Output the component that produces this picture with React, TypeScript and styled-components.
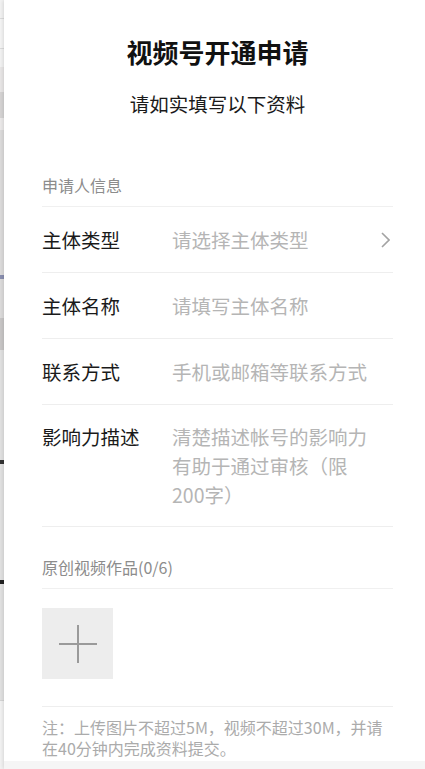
import React from 'react';
import styled, { createGlobalStyle } from 'styled-components';

const GlobalStyle = createGlobalStyle`
  html, body {
    margin: 0;
    padding: 0;
  }
  body {
    font-family: 'Noto Sans CJK SC', 'Noto Sans', sans-serif;
    background: #fff;
    overflow: hidden;
  }
  * {
    box-sizing: border-box;
  }
`;

type BandProps = {
  h: number;
  color: string;
};

const Shell = styled.div`
  display: flex;
  width: 425px;
  height: 769px;
  overflow: hidden;
`;

const LeftPeek = styled.div`
  width: 4px;
  flex-shrink: 0;
  display: flex;
  flex-direction: column;
  background: #f3f3f3;
`;

const Band = styled.div<BandProps>`
  height: ${(p) => p.h}px;
  flex-shrink: 0;
  background: ${(p) => p.color};
`;

const Drawer = styled.div`
  width: 421px;
  min-width: 0;
  flex-shrink: 0;
  display: flex;
  flex-direction: column;
  background: #fff;
  box-shadow: -1px 0 4px rgba(0, 0, 0, 0.12);
  position: relative;
`;

const Content = styled.div`
  width: 100%;
  padding: 34px 32px 0 38px;
`;

const Title = styled.h1`
  margin: 0;
  font-size: 26px;
  font-weight: 700;
  line-height: 36px;
  text-align: center;
  color: #111;
`;

const Subtitle = styled.p`
  margin: 19px 0 0;
  font-size: 19.5px;
  line-height: 29px;
  text-align: center;
  color: #1a1a1a;
`;

const SectionHead = styled.div<{ top: number }>`
  margin-top: ${(p) => (p.top > 40 ? p.top : 0)}px;
  padding: ${(p) => (p.top > 40 ? 0 : p.top)}px 0 9px;
  font-size: 16px;
  line-height: 24px;
  color: #8c8c8c;
  border-bottom: 1px solid #f0f0f0;
`;

const Row = styled.div<{ pad: number }>`
  display: flex;
  align-items: flex-start;
  width: 100%;
  padding: ${(p) => p.pad}px 0;
  border-bottom: 1px solid #eee;
  font-size: 19.5px;
  line-height: 29px;
`;

const Label = styled.div`
  width: 130px;
  flex-shrink: 0;
  color: #1a1a1a;
`;

const Placeholder = styled.div`
  flex: 1;
  min-width: 0;
  color: #b5b5b5;
`;

const Field = styled.input`
  display: block;
  width: 201px;
  height: 29px;
  margin: 0;
  padding: 0;
  border: 0;
  outline: none;
  background: transparent;
  font: inherit;
  color: #1a1a1a;

  &::placeholder {
    color: #b5b5b5;
  }
`;

const Area = styled.textarea`
  display: block;
  width: 201px;
  height: 87px;
  margin: 0;
  padding: 0;
  border: 0;
  outline: none;
  resize: none;
  overflow: hidden;
  background: transparent;
  font: inherit;
  line-height: 29px;
  color: #1a1a1a;

  &::placeholder {
    color: #b5b5b5;
  }
`;

const Chevron = styled.svg`
  align-self: center;
  margin-right: 3px;
  flex-shrink: 0;
`;

const UploadArea = styled.div`
  padding: 19px 0 27px;
  border-bottom: 1px solid #eee;
`;

const UploadBox = styled.button`
  width: 71px;
  height: 71px;
  padding: 0;
  border: 0;
  background: #ededed;
  display: flex;
  align-items: center;
  justify-content: center;
  cursor: pointer;
`;

const Note = styled.p`
  margin: 0;
  padding-top: 10px;
  font-size: 16px;
  line-height: 21px;
  color: #ababab;
`;

const Footer = styled.div`
  margin-top: 2px;
  height: 60px;
  background: #f5f5f5;
`;

const PEEK_BANDS = [
  { h: 18, color: '#f3f3f3' },
  { h: 1, color: '#dcdcdc' },
  { h: 29, color: '#f5f5f5' },
  { h: 1, color: '#dcdcdc' },
  { h: 18, color: '#f3f3f3' },
  { h: 25, color: '#e9e7e7' },
  { h: 26, color: '#d6d4d4' },
  { h: 12, color: '#eceaea' },
  { h: 145, color: '#dddcdc' },
  { h: 4, color: '#8a8fb0' },
  { h: 39, color: '#dddcdc' },
  { h: 32, color: '#c9c7c7' },
  { h: 110, color: '#e2e2e2' },
  { h: 4, color: '#333' },
  { h: 116, color: '#e2e2e2' },
  { h: 4, color: '#222' },
  { h: 116, color: '#e2e2e2' },
  { h: 1, color: '#d5d5d5' },
  { h: 68, color: '#f3f3f3' },
];

const App = () => {
  return (
    <>
      <GlobalStyle />
      <Shell>
        <LeftPeek>
          {PEEK_BANDS.map((b, i) => (
            <Band key={i} h={b.h} color={b.color} />
          ))}
        </LeftPeek>
        <Drawer>
          <Content>
            <Title>视频号开通申请</Title>
            <Subtitle>请如实填写以下资料</Subtitle>

            <SectionHead top={55}>申请人信息</SectionHead>

            <Row pad={18}>
              <Label>主体类型</Label>
              <Placeholder>请选择主体类型</Placeholder>
              <Chevron width='9' height='16' viewBox='0 0 9 16'>
                <path
                  d='M1 1 L8 8 L1 15'
                  fill='none'
                  stroke='#a3a3a3'
                  strokeWidth='1.6'
                />
              </Chevron>
            </Row>
            <Row pad={18}>
              <Label>主体名称</Label>
              <Field placeholder='请填写主体名称' />
            </Row>
            <Row pad={18}>
              <Label>联系方式</Label>
              <Field placeholder='手机或邮箱等联系方式' />
            </Row>
            <Row pad={17}>
              <Label>影响力描述</Label>
              <Area rows={3} placeholder='清楚描述帐号的影响力有助于通过审核（限200字）' />
            </Row>

            <SectionHead top={28}>原创视频作品(0/6)</SectionHead>

            <UploadArea>
              <UploadBox aria-label='上传'>
                <svg width='40' height='40' viewBox='0 0 40 40'>
                  <path d='M1 20 H39 M20 1 V39' stroke='#9a9a9a' strokeWidth='2' />
                </svg>
              </UploadBox>
            </UploadArea>

            <Note>注：上传图片不超过5M，视频不超过30M，并请在40分钟内完成资料提交。</Note>
          </Content>
          <Footer />
        </Drawer>
      </Shell>
    </>
  );
};

export default App;
